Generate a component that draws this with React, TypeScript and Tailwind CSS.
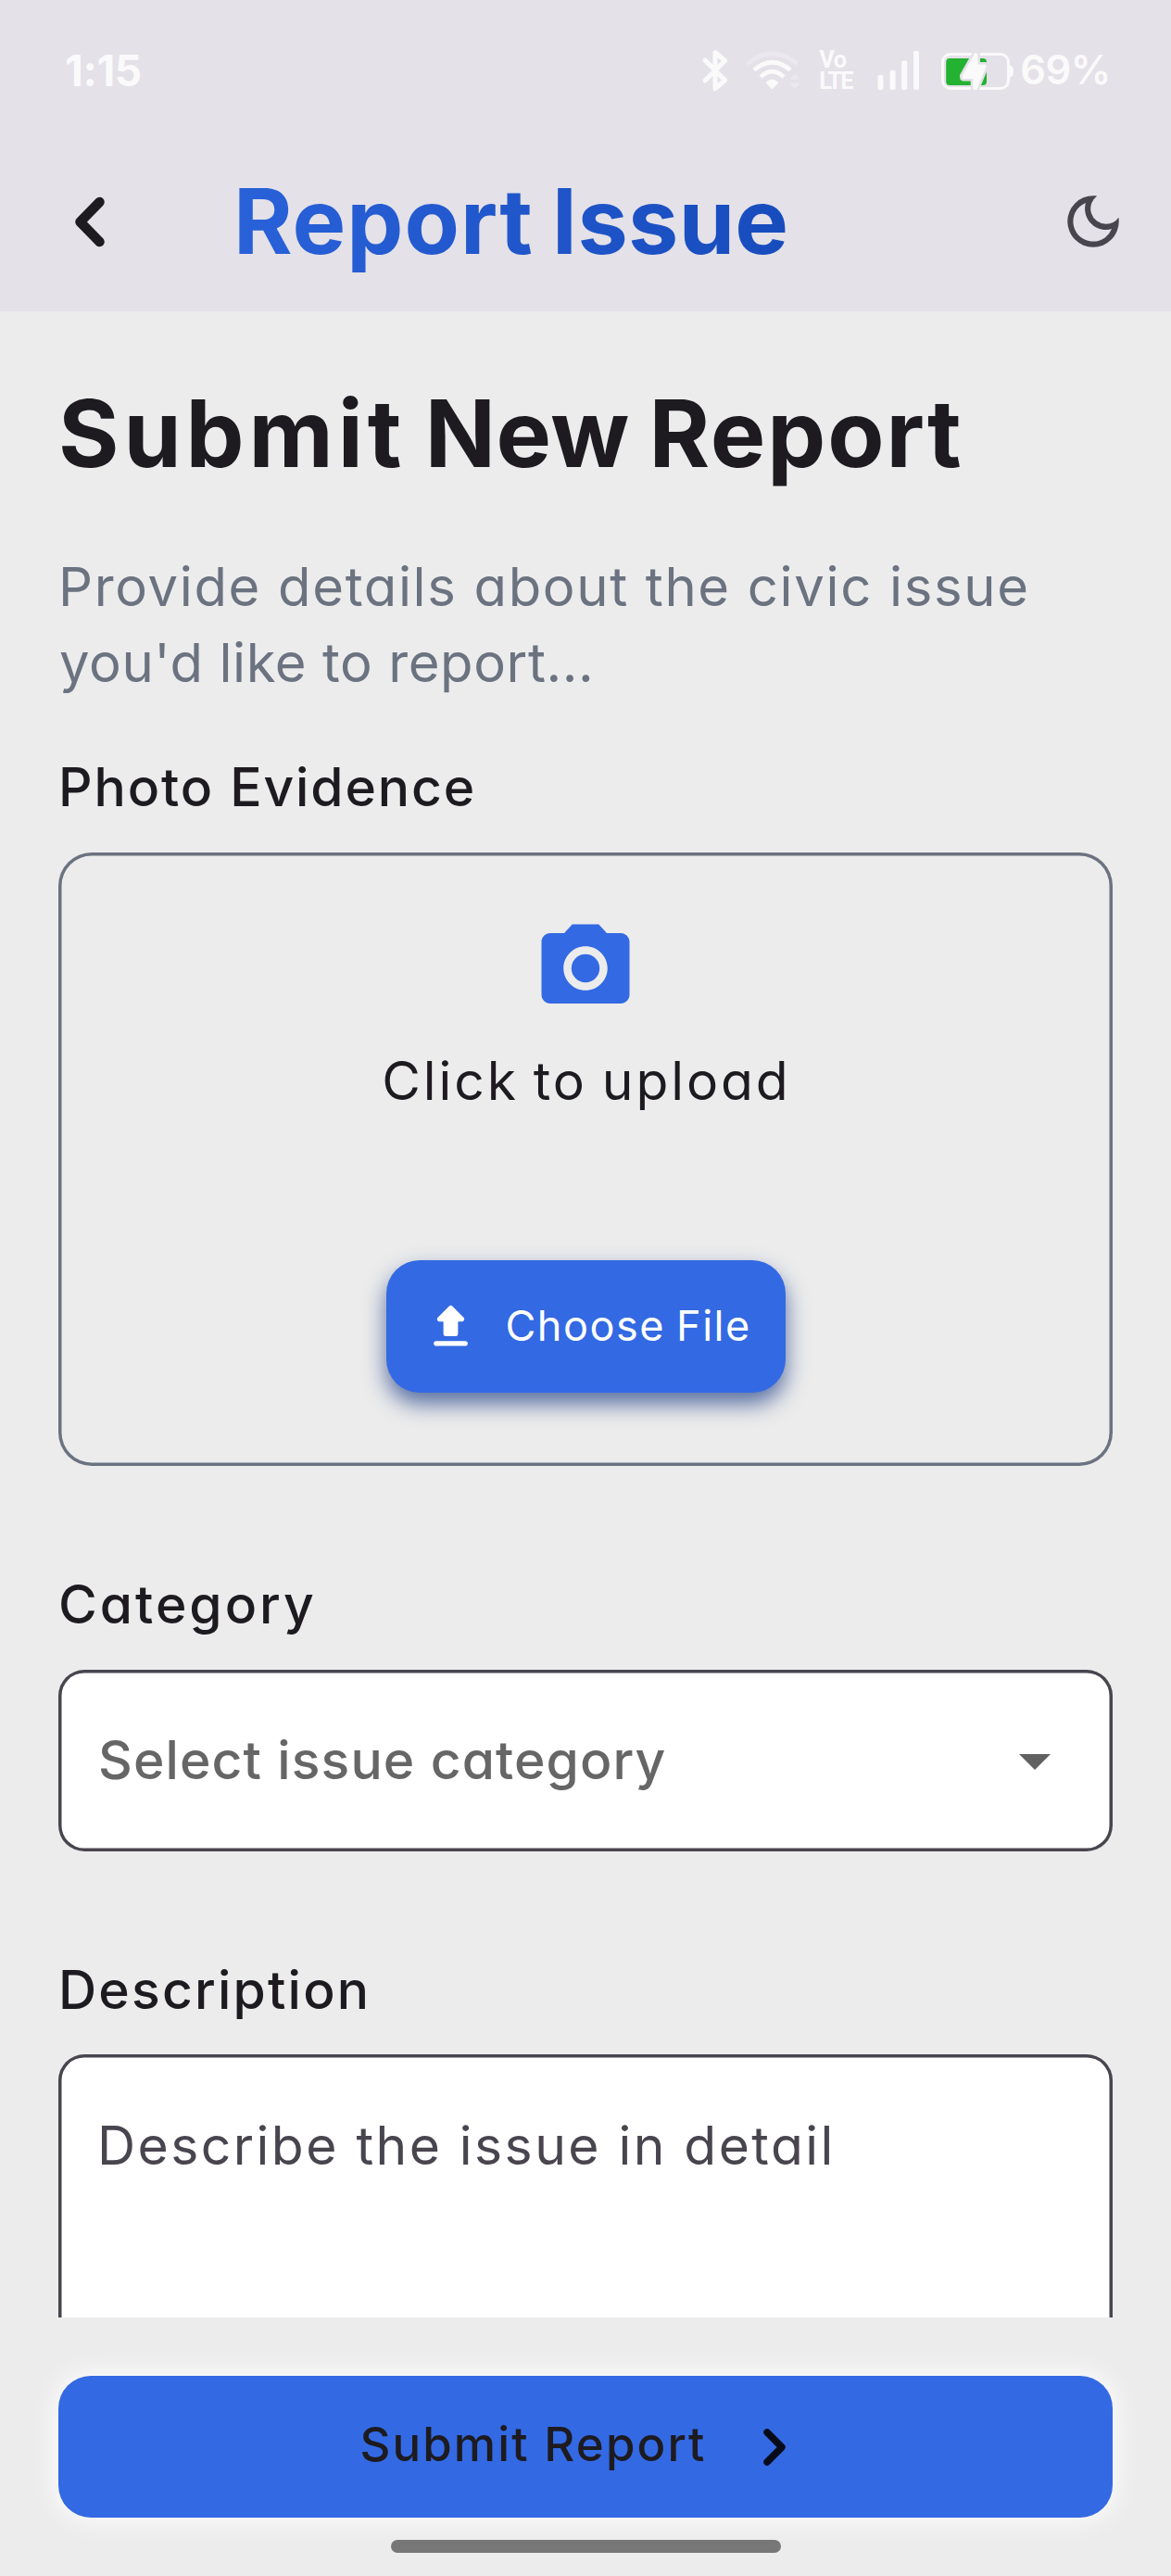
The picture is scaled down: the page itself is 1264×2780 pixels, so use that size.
import type { ReactNode } from "react";

function BluetoothIcon() {
  return (
    <svg className="h-12 w-7" viewBox="758 52 28 48" fill="none" stroke="#fafafa" strokeWidth="5" strokeLinecap="round" strokeLinejoin="round">
      <path d="M761 65 L782.5 86.5 L772 95.5 V56.5 L782.5 65.5 L761 87" />
    </svg>
  );
}

function WifiIcon() {
  return (
    <svg className="ml-[18px] h-12 w-[62px]" viewBox="804 52 62 48" fill="none" strokeLinecap="butt" strokeWidth="4.6">
      <path d="M806.5 69 Q833.5 46.5 860.5 69" stroke="#ebe9ef" />
      <path d="M814 75.5 Q833.5 59 853 75.5" stroke="#fafafa" />
      <path d="M821 83 Q833.5 71.5 846 83" stroke="#fafafa" />
      <path d="M826.5 89 Q833.5 82 840.5 89 L834.5 95.5 Q833.5 96.5 832.5 95.5 Z" fill="#fafafa" />
      <path d="M858 79.5 L863.5 86 H852.5 Z M852.5 89.7 H863.5 L858 96.5 Z" fill="#ebe9ef" />
    </svg>
  );
}

function SignalIcon() {
  return (
    <svg className="ml-6 h-12 w-[46px]" viewBox="947 52 46 48" fill="#fafafa">
      <rect x="947.5" y="81" width="6" height="16" rx="1.8" />
      <rect x="960.6" y="76" width="6" height="21" rx="1.8" />
      <rect x="973.2" y="65.5" width="6" height="31.5" rx="1.8" />
      <rect x="986" y="55" width="6" height="42" rx="1.8" />
    </svg>
  );
}

function BatteryIcon() {
  const bolt = "M1052.7 56.5 L1055.5 58.5 V69.5 H1063.5 Q1065.3 69.8 1064.8 71.5 L1054 97.5 L1050.2 96 V85 H1040 Q1038.2 84.6 1038.5 81.5 Z";
  return (
    <svg className="ml-[23px] h-12 w-[79px]" viewBox="1016 52 79 48">
      <rect x="1017.5" y="58.5" width="71" height="37" rx="8.5" fill="none" stroke="#fafafa" strokeWidth="3" />
      <path d="M1089.5 70.5 Q1094 70.5 1094 77 Q1094 83.5 1089.5 83.5 Z" fill="#fafafa" />
      <rect x="1021.2" y="63" width="43.8" height="29" rx="4" fill="#24b232" />
      <path d={bolt} fill="#e4e1e8" stroke="#e4e1e8" strokeWidth="5" />
      <path d={bolt} fill="#fafafa" />
    </svg>
  );
}

function StatusBar() {
  return (
    <div className="flex h-[141px] items-center pt-[11px] pr-[65px] pl-[70px] text-[#fafafa]">
      <span className="text-[46px] font-bold tracking-[-0.4px]">1:15</span>
      <div className="ml-auto flex items-center">
        <BluetoothIcon />
        <WifiIcon />
        <div className="ml-[18px] w-[39px] font-['Roboto',sans-serif] text-[25.5px] leading-[23px] font-bold">
          <div className="tracking-[-0.4px]">Vo</div>
          <div className="tracking-[-1.8px]">LTE</div>
        </div>
        <SignalIcon />
        <BatteryIcon />
        <span className="ml-1.5 text-[43.5px] font-semibold tracking-[-0.5px]">69%</span>
      </div>
    </div>
  );
}

function Header() {
  return (
    <header className="h-[336px] shrink-0 bg-[#e4e1e8]">
      <StatusBar />
      <div className="flex h-[195px] items-center pr-[47px] pl-[54px]">
        <button className="h-[84px] w-[84px]" aria-label="Back">
          <svg viewBox="0 0 84 84" fill="none" stroke="#1d1b20" strokeWidth="10.5" strokeLinecap="round" strokeLinejoin="round">
            <path d="M53.5 21 L32.5 42.5 L53.5 64" />
          </svg>
        </button>
        <h1 className="ml-[114px] bg-gradient-to-r from-[#2961d9] to-[#174cbd] bg-clip-text text-[97px] leading-[120px] font-bold whitespace-nowrap text-transparent [word-spacing:-3px]">
          <span className="tracking-[1px]">Report</span> <span className="tracking-[0.3px]">Issue</span>
        </h1>
        <button className="ml-auto h-[74px] w-[74px]" aria-label="Dark mode">
          <svg viewBox="0 0 24 24" fill="#49454f">
            <path d="M9.37 5.51A7.35 7.35 0 0 0 9.1 7.5c0 4.08 3.32 7.4 7.4 7.4.68 0 1.35-.09 1.99-.27A7.014 7.014 0 0 1 12 19c-3.86 0-7-3.14-7-7 0-2.93 1.81-5.45 4.37-6.49zM12 3a9 9 0 1 0 9 9c0-.46-.04-.92-.1-1.36a5.389 5.389 0 0 1-4.4 2.26 5.403 5.403 0 0 1-3.14-9.8c-.44-.06-.9-.1-1.36-.1z" />
          </svg>
        </button>
      </div>
    </header>
  );
}

function Label({ className, children }: { className: string; children: ReactNode }) {
  return <h3 className={"text-[57px] leading-[84px] font-medium text-[#1d1b20] " + className}>{children}</h3>;
}

function UploadBox() {
  return (
    <div className="mt-[27.5px] flex h-[662.5px] flex-col items-center rounded-[36px] pt-[68px] shadow-[inset_0_0_0_3.5px_#6b7280]">
      <svg className="h-[114px] w-[114px]" viewBox="0 0 24 24" fill="#3369e3">
        <circle cx="12" cy="12" r="3.2" />
        <path d="M9 2 7.17 4H4c-1.1 0-2 .9-2 2v12c0 1.1.9 2 2 2h16c1.1 0 2-.9 2-2V6c0-1.1-.9-2-2-2h-3.17L15 2H9zm3 15c-2.76 0-5-2.24-5-5s2.24-5 5-5 5 2.24 5 5-2.24 5-5 5z" />
      </svg>
      <p className="mt-[23px] pl-0.5 text-[57px] leading-[84px] tracking-[2.9px] text-[#1d1b20] [word-spacing:-3px]">Click to upload</p>
      <button className="mt-[151px] flex h-[143px] w-[431px] items-center rounded-[36px] bg-[#3369e3] pl-[38px] text-white shadow-[0_12px_23px_rgba(30,62,135,0.72)]">
        <svg className="h-[63px] w-[63px] shrink-0" viewBox="0 0 24 24" fill="currentColor">
          <path d="M10 16h4c.55 0 1-.45 1-1v-5h1.59c.89 0 1.34-1.08.71-1.71L12.71 3.7a.996.996 0 0 0-1.41 0L6.71 8.29c-.63.63-.19 1.71.7 1.71H9v5c0 .55.45 1 1 1zm-4 2h12c.55 0 1 .45 1 1s-.45 1-1 1H6c-.55 0-1-.45-1-1s.45-1 1-1z" />
        </svg>
        <span className="ml-7 text-[45px] tracking-[1.5px] whitespace-nowrap [word-spacing:-2px]">Choose File</span>
      </button>
    </div>
  );
}

export default function App() {
  return (
    <div className="flex h-[2780px] w-[1264px] flex-col overflow-hidden bg-[#ececec] font-['Inter',sans-serif] [font-feature-settings:'cv11'_1]">
      <Header />
      <main className="h-[2165px] shrink-0 overflow-hidden px-[63px] pt-[72px]">
        <h2 className="text-[100px] leading-[120px] font-bold whitespace-nowrap text-[#1d1b20] [word-spacing:-3px]">
          <span className="tracking-[4.9px]">Submit</span> <span className="tracking-[0.5px]">New</span>{" "}
          <span className="tracking-[1.9px]">Report</span>
        </h2>
        <p className="mt-16 text-[58px] leading-[82px] whitespace-nowrap text-[#6b7280]">
          <span className="block tracking-[1.65px]">Provide details about the civic issue</span>
          <span className="block pl-px tracking-[0.58px]">you'd like to report...</span>
        </p>
        <Label className="mt-[52px] tracking-[1.9px]">Photo Evidence</Label>
        <UploadBox />
        <Label className="mt-[108px] tracking-[3px]">Category</Label>
        <div className="mt-[27.5px] flex h-[196.5px] items-center justify-between rounded-[28px] bg-white pr-[67px] pl-[43px] shadow-[inset_0_0_0_3.5px_#49454f]">
          <span className="text-[57px] font-medium tracking-[1.1px] text-[#666666]">Select issue category</span>
          <svg className="mt-[3px] h-[17px] w-[34px]" viewBox="0 0 34 17" fill="#616161">
            <path d="M0 0H34L17 17Z" />
          </svg>
        </div>
        <Label className="mt-[108px] tracking-[2.2px]">Description</Label>
        <div className="mt-[27px] h-[420px] rounded-[28px] bg-white pt-[57px] pl-[42px] shadow-[inset_0_0_0_3.5px_#49454f]">
          <p className="text-[57px] leading-[84px] tracking-[2.45px] text-[#49454f]">Describe the issue in detail</p>
        </div>
      </main>
      <footer className="px-[63px] pt-[63px]">
        <button className="flex h-[153px] w-full items-center justify-center rounded-[35px] bg-[#3369e3] text-[#1d1b20] shadow-[0_0_28px_3px_rgba(255,255,255,0.9)]">
          <span className="mb-[5px] text-[51px] font-medium tracking-[2.1px]">Submit Report</span>
          <svg className="ml-[29px] h-[84px] w-[84px]" viewBox="0 0 84 84" fill="none" stroke="#080c1a" strokeWidth="7.5" strokeLinecap="round" strokeLinejoin="round">
            <path d="M36 26 L52 42 L36 58" />
          </svg>
        </button>
        <div className="mx-auto mt-6 h-3.5 w-[421px] rounded-full bg-[#777777]" />
      </footer>
    </div>
  );
}
